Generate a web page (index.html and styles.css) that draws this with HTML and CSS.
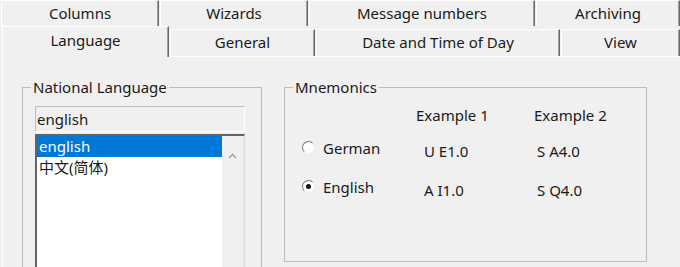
FILE: index.html
```html
<!DOCTYPE html>
<html lang="en">
  <head>
    <meta charset="UTF-8" />
    <title>Customize - Language</title>
    <link rel="stylesheet" href="styles.css">
  </head>
  <body>
    <!-- Tab strip, two rows -->
    <div class="tabs tabs-back">
      <div class="tab tab-columns">Columns</div>
      <div class="tab tab-wizards">Wizards</div>
      <div class="tab tab-messages">Message numbers</div>
      <div class="tab tab-archiving">Archiving</div>
    </div>
    <div class="tabs tabs-front">
      <div class="tab tab-language active">Language</div>
      <div class="tab tab-general">General</div>
      <div class="tab tab-date">Date and Time of Day</div>
      <div class="tab tab-view">View</div>
    </div>

    <div class="panel">
      <fieldset class="group group-language">
        <legend>National Language</legend>
        <div class="group-body">
          <div class="lang-field">english</div>
          <div class="lang-list">
            <ul class="lang-items">
              <li class="selected">english</li>
              <li>中文(简体)</li>
            </ul>
            <div class="scrollbar">
              <svg width="9" height="6" viewBox="0 0 9 6">
                <path d="M1 5 L4.5 1.5 L8 5" fill="none" stroke="#9a9a9a" stroke-width="1.4" />
              </svg>
            </div>
          </div>
        </div>
      </fieldset>

      <fieldset class="group group-mnemonics">
        <legend>Mnemonics</legend>
        <div class="mnemonics">
          <span></span>
          <span class="col-head">Example 1</span>
          <span class="col-head">Example 2</span>

          <label class="radio"><span class="dot"></span>German</label>
          <span class="ex1">U E1.0</span>
          <span class="ex2">S A4.0</span>

          <label class="radio"><span class="dot checked"></span>English</label>
          <span class="ex1">A I1.0</span>
          <span class="ex2">S Q4.0</span>
        </div>
      </fieldset>
    </div>
  </body>
</html>
```

FILE: styles.css
```css
:root {
  --face: #f0f0f0;
  --shadow: #a0a0a0;
  --dark: #696969;
  --text: #1a1a1a;
  --select: #0078d7;
  --font: "Noto Sans", "Noto Sans CJK SC", sans-serif;
}

* {
  margin: 0;
  padding: 0;
  box-sizing: border-box;
}

html,
body {
  width: 680px;
  height: 267px;
  overflow: hidden;
}

body {
  background: var(--face);
  font-family: var(--font);
  font-size: 15px;
  color: var(--text);
}

/* Tabs */
.tabs {
  display: flex;
}

.tabs-back {
  height: 26px;
  padding-left: 1px;
}

.tabs-front {
  height: 30px;
  align-items: flex-end;
  padding-left: 2px;
  position: relative;
  z-index: 1;
}

.tab {
  height: 27px;
  line-height: 24px;
  text-align: center;
  border-top: 1px solid #fff;
  border-left: 1px solid #fff;
  border-right: 1px solid var(--dark);
  box-shadow: inset -1px 0 var(--shadow);
  margin-right: 1px;
}

.tabs-back .tab {
  height: 26px;
}

.tab-columns { width: 158px; }
.tab-wizards { width: 148px; }
.tab-messages { width: 226px; }
.tab-archiving { flex: 1; margin-right: 0; }

.tab-language {
  width: 167px;
  height: 31px;
  line-height: 26px;
  margin-bottom: -1px;
  background: var(--face);
}

.tab-general { width: 145px; }
.tab-date { width: 244px; }
.tab-view { flex: 1; margin-right: 0; }

/* Page body under the tabs */
.panel {
  display: flex;
  align-items: flex-start;
  margin-left: 2px;
  height: 211px;
  border-top: 1px solid #fff;
  border-left: 1px solid #fff;
  padding: 20px 0 0 19px;
}

.group {
  border: 1px solid #bcbcbc;
  padding: 0;
}

.group legend {
  margin-left: 8px;
  padding: 0 2px;
  line-height: 20px;
}

.group-language {
  width: 240px;
  height: 200px;
}

.group-body {
  padding: 9px 0 0 12px;
}

.lang-field {
  width: 210px;
  height: 26px;
  line-height: 24px;
  padding-left: 1px;
  border: 1px solid #bdbdbd;
  border-bottom-color: #fff;
  border-right-color: #fff;
}

.lang-list {
  display: flex;
  width: 210px;
  height: 140px;
  margin-top: 2px;
  background: #fff;
  border-top: 2px solid #646464;
  border-left: 2px solid #646464;
  border-right: 1px solid #d8d8d8;
}

.lang-items {
  list-style: none;
  flex: 1;
}

.lang-items li {
  height: 21px;
  line-height: 20px;
  padding-left: 2px;
}

.lang-items li.selected {
  background: var(--select);
  color: #fff;
}

.scrollbar {
  width: 22px;
  background: var(--face);
  text-align: center;
  padding-top: 7px;
  border-right: 1px solid #e6e6e6;
}

.group-mnemonics {
  width: 363px;
  height: 185px;
  margin-left: 22px;
}

.mnemonics {
  display: grid;
  grid-template-columns: 114px 118px auto;
  grid-template-rows: 32px 40px 38px;
  align-items: center;
  padding-left: 17px;
}

.col-head {
  align-self: end;
  padding-bottom: 4px;
}

.ex1 { padding: 3px 0 0 8px; }
.ex2 { padding: 3px 0 0 3px; }

.radio {
  display: flex;
  align-items: center;
  gap: 8px;
  margin-top: -3px;
}

.dot {
  width: 13px;
  height: 13px;
  border-radius: 50%;
  background: #fff;
  border: 1px solid;
  border-color: #777 #eee #eee #777;
  display: flex;
  align-items: center;
  justify-content: center;
}

.dot.checked::after {
  content: "";
  width: 5px;
  height: 5px;
  border-radius: 50%;
  background: #111;
}
```
